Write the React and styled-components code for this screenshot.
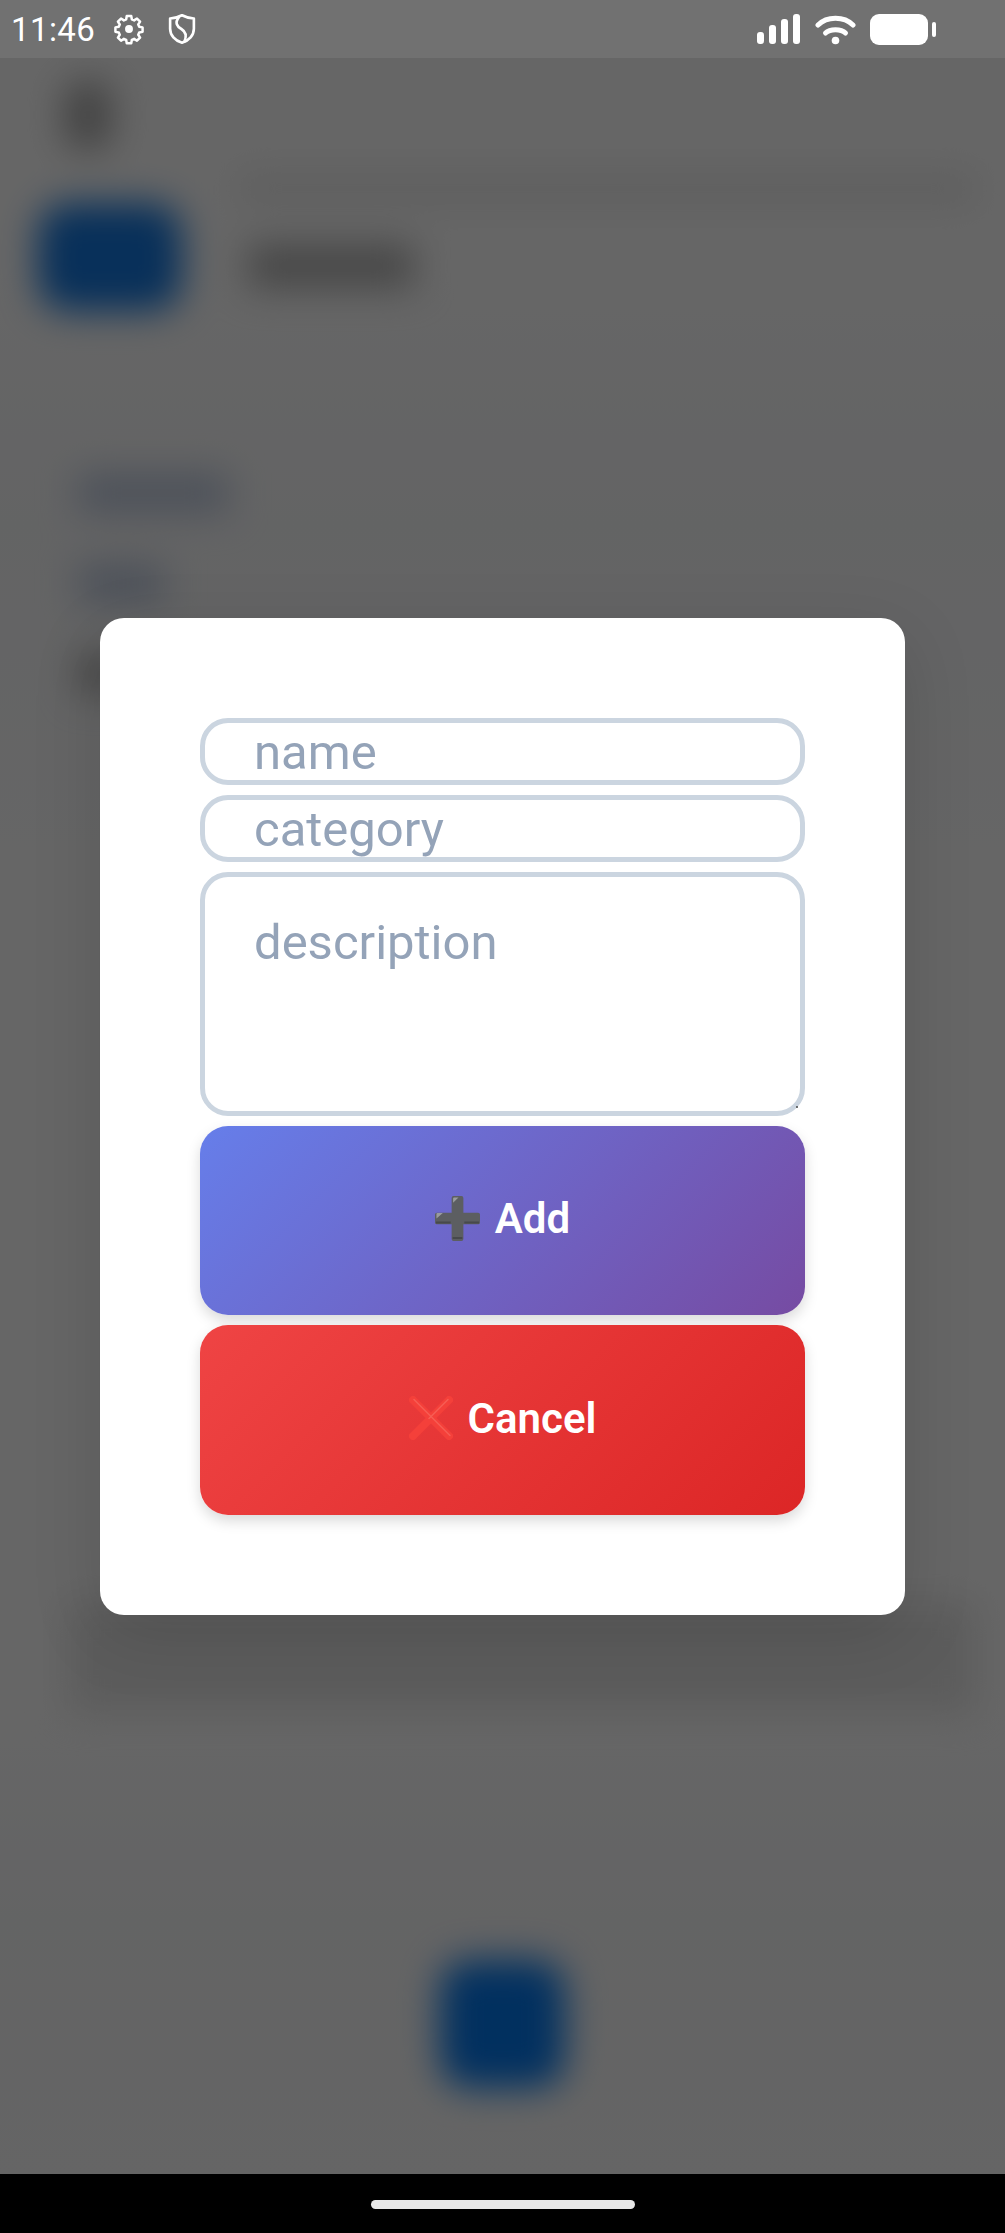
import React from 'react';
import styled, { createGlobalStyle } from 'styled-components';

const GlobalStyle = createGlobalStyle`
  html, body {
    margin: 0;
    padding: 0;
    background: #000;
    font-family: Roboto, "Liberation Sans", sans-serif;
  }
  * {
    box-sizing: border-box;
  }
`;

const Screen = styled.div`
  display: flex;
  flex-direction: column;
  width: 1005px;
  height: 2233px;
  overflow: hidden;
`;

const StatusBar = styled.div`
  display: flex;
  align-items: center;
  flex: 0 0 58px;
  padding: 0 69px 0 11px;
  background: #717171;
  color: #fff;
`;

const Clock = styled.span`
  font-size: 33px;
  font-weight: 400;
  letter-spacing: 0.4px;
  margin-right: 17px;
`;

const StatusLeft = styled.div`
  display: flex;
  align-items: center;
  gap: 21px;
`;

const StatusRight = styled.div`
  display: flex;
  align-items: center;
  gap: 14px;
  margin-left: auto;
`;

const Main = styled.div`
  position: relative;
  flex: 1;
  overflow: hidden;
  background: linear-gradient(#ffffff 10%, #f8f9fb 22%, #ffffff 40%, #ffffff 78%, #f8f9fb 88%, #fcfcfc 100%);
`;

// the page behind the dialog, only visible as blurred shapes
const BlurredPage = styled.div`
  display: flex;
  flex-direction: column;
  height: 100%;
  padding: 22px 30px 86px 38px;
  filter: blur(18px);
`;

const BackIcon = styled.div`
  width: 48px;
  height: 70px;
  margin-left: 26px;
  border-radius: 20px;
  background: #a8a8a8;
`;

const HeaderBand = styled.div`
  height: 29px;
  margin: 24px 0 0 200px;
  background: #ebebeb;
`;

const HeaderRow = styled.div`
  display: flex;
  align-items: center;
  gap: 66px;
`;

const Avatar = styled.div`
  width: 144px;
  height: 108px;
  border-radius: 30px;
  background: #1578e0;
`;

const HeaderTitle = styled.div`
  width: 166px;
  height: 44px;
  margin-top: 18px;
  background: #b2b2b2;
`;

const Card = styled.div`
  display: flex;
  flex-direction: column;
  gap: 50px;
  margin-top: 162px;
  padding-left: 40px;
`;

const CardLabel = styled.div`
  height: 40px;
  width: ${p => p.$width}px;
  background: ${p => p.$color};
`;

const CardBand = styled.div`
  height: 110px;
  margin: 860px 0 0 -10px;
  background: #e6e6e6;
`;

const FloatingButton = styled.div`
  align-self: center;
  width: 125px;
  height: 128px;
  margin-top: auto;
  margin-right: 8px;
  border-radius: 30px;
  background: #0478ee;
`;

const Scrim = styled.div`
  position: absolute;
  inset: 0;
  display: flex;
  align-items: center;
  justify-content: center;
  padding-top: 1px;
  background: rgba(0, 0, 0, 0.6);
`;

const Modal = styled.div`
  display: flex;
  flex-direction: column;
  gap: 10px;
  width: 805px;
  height: 997px;
  padding: 100px;
  border-radius: 24px;
  background: #fff;
  box-shadow: 0 20px 70px rgba(0, 0, 0, 0.13);
`;

const fieldStyles = `
  display: block;
  width: 100%;
  border: 5px solid #cbd5e0;
  background: #fff;
  color: #334155;
  font-family: Roboto, "Liberation Sans", sans-serif;
  font-size: 49px;
  outline: none;
  &::placeholder {
    color: #94a3b8;
    opacity: 1;
  }
`;

const Input = styled.input`
  ${fieldStyles}
  height: 67px;
  padding: 2px 49px 0;
  border-radius: 28px;
`;

const AreaWrap = styled.div`
  position: relative;
  height: 244px;
`;

const TextArea = styled.textarea`
  ${fieldStyles}
  height: 100%;
  padding: 37px 49px 0;
  border-radius: 28px;
  resize: none;
`;

const ResizeDot = styled.span`
  position: absolute;
  right: 7px;
  bottom: 8px;
  width: 2px;
  height: 2px;
  border-radius: 50%;
  background: #444;
`;

const ActionButton = styled.button`
  display: flex;
  align-items: center;
  justify-content: center;
  gap: ${p => p.$gap}px;
  height: 190px;
  padding: 0 0 4px;
  border: 0;
  border-radius: 28px;
  background: ${p =>
    p.$variant === 'danger'
      ? 'linear-gradient(135deg, #ef4444, #dc2626)'
      : 'linear-gradient(135deg, #667eea, #764ba2)'};
  box-shadow: 0 6px 14px rgba(0, 0, 0, 0.15);
  color: #fff;
  font-family: Roboto, "Liberation Sans", sans-serif;
  font-size: 42px;
  font-weight: 600;
`;

const NavBar = styled.div`
  display: flex;
  align-items: flex-start;
  justify-content: center;
  flex: 0 0 59px;
  padding-top: 26px;
  background: #000;
`;

const HomeHandle = styled.div`
  width: 264px;
  height: 9px;
  border-radius: 5px;
  background: #e8e8e8;
`;

const GearIcon = () => (
  <svg width="34" height="34" viewBox="0 0 24 24" fill="none" stroke="#fff" strokeWidth="2" strokeLinejoin="round">
    <path d="M10.2 2.5h3.6l.5 2.7 1.8.8 2.3-1.5 2.5 2.5-1.5 2.3.8 1.8 2.7.5v3.6l-2.7.5-.8 1.8 1.5 2.3-2.5 2.5-2.3-1.5-1.8.8-.5 2.7h-3.6l-.5-2.7-1.8-.8-2.3 1.5-2.5-2.5 1.5-2.3-.8-1.8-2.7-.5v-3.6l2.7-.5.8-1.8-1.5-2.3 2.5-2.5 2.3 1.5 1.8-.8z" transform="translate(12 12) scale(0.88) translate(-12 -12.9)" />
    <circle cx="12" cy="12" r="2.8" fill="#fff" stroke="none" />
  </svg>
);

const ShieldIcon = () => (
  <svg width="30" height="34" viewBox="0 0 24 26" fill="none" stroke="#fff" strokeWidth="2.1" strokeLinecap="round" strokeLinejoin="round">
    <path d="M12 2c3 1.6 6 2.4 9.5 2.6v8.2c0 5.2-3.8 9.6-9.5 11.2C6.3 22.400 2.500 18 2.500 12.800V4.600C6 4.400 9 3.600 12 2z" />
    <path d="M9.500 3.500C6 8 8 11 11.500 13c3 1.800 4.500 5 2.500 10" />
  </svg>
);

const SignalIcon = () => (
  <svg width="44" height="32" viewBox="0 0 44 32" fill="#fff">
    <rect x="0" y="19" width="7" height="12" rx="3" />
    <rect x="12" y="12" width="7" height="19" rx="3" />
    <rect x="24" y="6" width="7" height="25" rx="3" />
    <rect x="36" y="1" width="7" height="30" rx="3" />
  </svg>
);

const WifiIcon = () => (
  <svg width="41" height="31" viewBox="0 0 41 31" fill="none" stroke="#fff" strokeWidth="5" strokeLinecap="round">
    <path d="M3 11C12 2 29 2 38 11" />
    <path d="M10.500 19C15 14.500 26 14.500 30.500 19" />
    <circle cx="20.500" cy="26.500" r="3.800" fill="#fff" stroke="none" />
  </svg>
);

const BatteryIcon = () => (
  <svg width="66" height="33" viewBox="0 0 66 33" fill="#fff">
    <rect x="0" y="1" width="58" height="31" rx="9" />
    <rect x="62" y="9" width="4" height="15" rx="2" />
  </svg>
);

const PlusEmoji = () => (
  <svg width="45" height="45" viewBox="0 0 46 46">
    <path d="M17 2a2 2 0 0 1 2-2h8a2 2 0 0 1 2 2v15h15a2 2 0 0 1 2 2v8a2 2 0 0 1-2 2H29v15a2 2 0 0 1-2 2h-8a2 2 0 0 1-2-2V29H2a2 2 0 0 1-2-2v-8a2 2 0 0 1 2-2h15z" fill="#5c5e61" />
    <path d="M18 44v-2h10v2zM1 28v-2h15v2zM30 28v-2h15v2z" fill="#47494b" />
    <path d="M18.500 7V2.500a1 1 0 0 1 1-1H24zM1.500 23v-4.500a1 1 0 0 1 1-1H8z" fill="#9a9c9e" />
  </svg>
);

const CrossEmoji = () => (
  <svg width="44" height="44" viewBox="0 0 44 44" fill="none" strokeLinecap="round">
    <path d="M4 4l36 36M40 4L4 40" stroke="#f4403a" strokeWidth="8" />
    <path d="M5 3.500l36 36M39 3.500L20 22.500" stroke="#f86a5e" strokeWidth="1.500" opacity="0.7" />
  </svg>
);

const App = () => {
  return (
    <Screen>
      <GlobalStyle />
      <StatusBar>
        <Clock>11:46</Clock>
        <StatusLeft>
          <GearIcon />
          <ShieldIcon />
        </StatusLeft>
        <StatusRight>
          <SignalIcon />
          <WifiIcon />
          <BatteryIcon />
        </StatusRight>
      </StatusBar>
      <Main>
        <BlurredPage>
          <BackIcon />
          <HeaderBand />
          <HeaderRow>
            <Avatar />
            <HeaderTitle />
          </HeaderRow>
          <Card>
            <CardLabel $width={150} $color="#bfcbe0" />
            <CardLabel $width={86} $color="#bfcbe0" />
            <CardLabel $width={44} $color="#b0b0b0" />
            <CardBand />
          </Card>
          <FloatingButton />
        </BlurredPage>
        <Scrim>
          <Modal>
            <Input placeholder="name" />
            <Input placeholder="category" />
            <AreaWrap>
              <TextArea placeholder="description" />
              <ResizeDot />
            </AreaWrap>
            <ActionButton $gap={15}>
              <PlusEmoji />
              Add
            </ActionButton>
            <ActionButton $variant="danger" $gap={15}>
              <CrossEmoji />
              Cancel
            </ActionButton>
          </Modal>
        </Scrim>
      </Main>
      <NavBar>
        <HomeHandle />
      </NavBar>
    </Screen>
  );
};

export default App;
